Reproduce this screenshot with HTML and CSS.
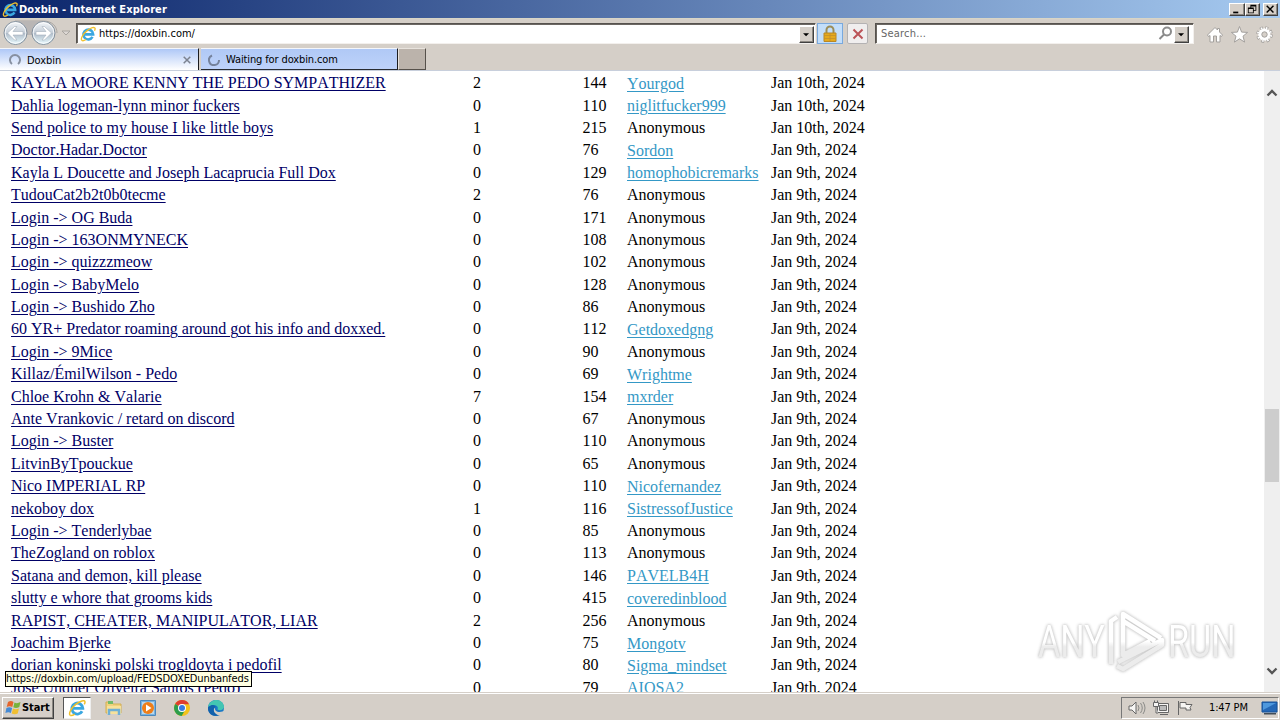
FILE: index.html
```html
<!DOCTYPE html>
<html lang="en">
<head>
<meta charset="utf-8">
<title>Doxbin - Internet Explorer</title>
<link rel="stylesheet" href="styles.css">
</head>
<body>
<svg width="0" height="0" class="defs">
  <defs>
    <linearGradient id="orb" x1="0" y1="0" x2="0" y2="1"><stop offset="0" stop-color="#f4f7fa"/><stop offset=".48" stop-color="#c5ced8"/><stop offset=".52" stop-color="#b1bdca"/><stop offset="1" stop-color="#e9fbff"/></linearGradient>
    <linearGradient id="mark" x1="0" y1="0" x2="0" y2="1"><stop offset=".5" stop-color="#fff"/><stop offset=".6" stop-color="#ececec"/></linearGradient>
    <symbol id="ie" viewBox="0 0 18 18">
      <path d="M14.100 12.300A5.500 5.500 0 1 1 14.800 9.400H5" fill="none" stroke="#3aa7e0" stroke-width="2.900"/>
      <path d="M2.200 16.300C.2 14.600 3.200 9 8 5.200 12 2 16.600.5 17 2.800c.1.700-.2 1.600-.7 2.500" fill="none" stroke="#f0c02c" stroke-width="1.500"/>
      <path d="M2.200 16.300c1.100.7 3-.1 4.500-1.100" fill="none" stroke="#f0c02c" stroke-width="1.500"/>
    </symbol>
  </defs>
</svg>
<div class="screen">
  <header class="titlebar">
    <svg class="ie-title"><use href="#ie"/></svg>
    <span class="title">Doxbin - Internet Explorer</span>
    <div class="winbtns">
      <svg width="16" height="13" viewBox="0 0 15 13"><path d="M3 9h6v2H3z"/></svg>
      <svg width="15" height="13" viewBox="0 0 15 13"><path d="M5 1h7v7H9V7h2V3H6v1H5zM2 4h7v7H2zm1 2v4h5V6z" fill-rule="evenodd"/></svg>
      <svg class="close" width="15" height="13" viewBox="0 0 15 13"><path d="M3 2l8 8M11 2l-8 8" stroke="#000" stroke-width="1.700"/></svg>
    </div>
  </header>

  <div class="toolbar">
    <svg class="nav" width="72" height="28" viewBox="0 0 72 28">
      <path d="M15 2h28c9 0 14 5 14 12" fill="none" stroke="#aaa7a4"/>
      <path d="M15 2h28v14H15z" fill="#b9b6b5"/>
      <g stroke="#83909d"><circle cx="15.500" cy="14" r="11.500" fill="url(#orb)"/><circle cx="43.500" cy="14" r="11.500" fill="url(#orb)"/></g>
      <g fill="none" stroke="#fff" stroke-opacity=".8"><circle cx="15.500" cy="14" r="10.300"/><circle cx="43.500" cy="14" r="10.300"/></g>
      <g fill="#fff" stroke="#a5b0bc" stroke-width=".6"><path d="M7.500 14l7-6.500h2.500l-4 5H23v3.500h-10l4 5h-2.500z"/><path d="M51.500 14l-7-6.500H42l4 5H36v3.500h10l-4 5h2.500z"/></g>
      <path d="M62 12h8l-4 4z" fill="#ddd8d4" stroke="#aaa6a1"/>
    </svg>
    <div class="field address">
      <svg class="ie-small"><use href="#ie"/></svg>
      <span>https://doxbin.com/</span>
      <svg class="drop" width="15" height="17" viewBox="0 0 15 17"><path d="M3.500 7h7L7 10.500z"/></svg>
    </div>
    <div class="tbtn lock"><svg width="16" height="18" viewBox="0 0 16 18"><path d="M4.500 9V5a3.500 3.500 0 0 1 7 0v4" fill="none" stroke="#9b8d59" stroke-width="2"/><path d="M2 8h12v8.500H2z" fill="#e5a91d" stroke="#b98725"/><path d="M2 10.500h12M2 13.500h12M8 8v8" stroke="#c4902b" stroke-width=".8"/></svg></div>
    <div class="tbtn stop"><svg width="12" height="12" viewBox="0 0 12 12"><path d="M1.500 1.500l9 9M10.500 1.500l-9 9" stroke="#bb5357" stroke-width="2"/></svg></div>
    <div class="field search">
      <span>Search...</span>
      <svg class="lens" width="15" height="15" viewBox="0 0 15 15"><circle cx="9" cy="5.500" r="4" fill="none" stroke="#8c8c8c" stroke-width="2"/><path d="M6 8.500L1.500 13" stroke="#888" stroke-width="2"/></svg>
      <svg class="drop" width="15" height="17" viewBox="0 0 15 17"><path d="M3.500 7h7L7 10.500z"/></svg>
    </div>
    <svg class="tools" width="70" height="20" viewBox="0 0 70 20" fill="#fff" stroke="#a3a09d">
      <path d="M1.500 10L9 2.500l2.500 2.500V3.500h2V7l3 3-1 1.500-1.500-1V17h-3.500v-6h-3v6H4v-6.500l-1.500 1z"/>
      <path d="M33.500 1.500l2.100 5.600 6 .3-4.600 3.800 1.600 5.900-5.100-3.300-5.100 3.300 1.600-5.900-4.600-3.800 6-.3z"/>
      <circle cx="58.500" cy="9.500" r="6.300" stroke-width="4" stroke-dasharray="2.700 2.250"/>
      <circle cx="58.500" cy="9.500" r="6.300" stroke="#fff" stroke-width="2.600" stroke-dasharray="1.500 3.450" stroke-dashoffset="-.6" fill="none"/>
      <circle cx="58.500" cy="9.500" r="4.400" stroke="#fff" stroke-width="2.600" fill="none"/>
      <circle cx="58.500" cy="9.500" r="2.700" fill="#d6d0c9"/>
    </svg>
  </div>

  <div class="tabs">
    <div class="tab active"><svg width="12" height="12" viewBox="0 0 12 12"><path d="M3 10a5 5 0 1 1 6 0" fill="none" stroke="#8790a0" stroke-width="2"/></svg><span>Doxbin</span><svg class="x" width="8" height="8" viewBox="0 0 8 8"><path d="M.7.7l6.600 6.600M7.300.7L.7 7.300" stroke="#7b8290" stroke-width="1.500"/></svg></div>
    <div class="tab waiting"><svg width="12" height="12" viewBox="0 0 12 12"><path d="M4 1.500A5 5 0 1 0 11 6" fill="none" stroke="#75829c" stroke-width="2"/></svg><span>Waiting for doxbin.com</span></div>
    <div class="newtab"></div>
  </div>

  <main class="page">
    <div class="list">
      <div class="row"><a class="wide">KAYLA MOORE KENNY THE PEDO SYMPATHIZER</a><i>2</i><i>144</i><b>Yourgod</b><i>Jan 10th, 2024</i></div>
      <div class="row"><a>Dahlia logeman-lynn minor fuckers</a><i>0</i><i>110</i><b>niglitfucker999</b><i>Jan 10th, 2024</i></div>
      <div class="row"><a>Send police to my house I like little boys</a><i>1</i><i>215</i><i>Anonymous</i><i>Jan 10th, 2024</i></div>
      <div class="row"><a>Doctor.Hadar.Doctor</a><i>0</i><i>76</i><b>Sordon</b><i>Jan 9th, 2024</i></div>
      <div class="row"><a>Kayla L Doucette and Joseph Lacaprucia Full Dox</a><i>0</i><i>129</i><b>homophobicremarks</b><i>Jan 9th, 2024</i></div>
      <div class="row"><a>TudouCat2b2t0b0tecme</a><i>2</i><i>76</i><i>Anonymous</i><i>Jan 9th, 2024</i></div>
      <div class="row"><a>Login -&gt; OG Buda</a><i>0</i><i>171</i><i>Anonymous</i><i>Jan 9th, 2024</i></div>
      <div class="row"><a>Login -&gt; 163ONMYNECK</a><i>0</i><i>108</i><i>Anonymous</i><i>Jan 9th, 2024</i></div>
      <div class="row"><a>Login -&gt; quizzzmeow</a><i>0</i><i>102</i><i>Anonymous</i><i>Jan 9th, 2024</i></div>
      <div class="row"><a>Login -&gt; BabyMelo</a><i>0</i><i>128</i><i>Anonymous</i><i>Jan 9th, 2024</i></div>
      <div class="row"><a>Login -&gt; Bushido Zho</a><i>0</i><i>86</i><i>Anonymous</i><i>Jan 9th, 2024</i></div>
      <div class="row"><a>60 YR+ Predator roaming around got his info and doxxed.</a><i>0</i><i>112</i><b>Getdoxedgng</b><i>Jan 9th, 2024</i></div>
      <div class="row"><a>Login -&gt; 9Mice</a><i>0</i><i>90</i><i>Anonymous</i><i>Jan 9th, 2024</i></div>
      <div class="row"><a>Killaz/ÉmilWilson - Pedo</a><i>0</i><i>69</i><b>Wrightme</b><i>Jan 9th, 2024</i></div>
      <div class="row"><a>Chloe Krohn &amp; Valarie</a><i>7</i><i>154</i><b>mxrder</b><i>Jan 9th, 2024</i></div>
      <div class="row"><a>Ante Vrankovic / retard on discord</a><i>0</i><i>67</i><i>Anonymous</i><i>Jan 9th, 2024</i></div>
      <div class="row"><a>Login -&gt; Buster</a><i>0</i><i>110</i><i>Anonymous</i><i>Jan 9th, 2024</i></div>
      <div class="row"><a>LitvinByTpouckue</a><i>0</i><i>65</i><i>Anonymous</i><i>Jan 9th, 2024</i></div>
      <div class="row"><a>Nico IMPERIAL RP</a><i>0</i><i>110</i><b>Nicofernandez</b><i>Jan 9th, 2024</i></div>
      <div class="row"><a>nekoboy dox</a><i>1</i><i>116</i><b>SistressofJustice</b><i>Jan 9th, 2024</i></div>
      <div class="row"><a>Login -&gt; Tenderlybae</a><i>0</i><i>85</i><i>Anonymous</i><i>Jan 9th, 2024</i></div>
      <div class="row"><a>TheZogland on roblox</a><i>0</i><i>113</i><i>Anonymous</i><i>Jan 9th, 2024</i></div>
      <div class="row"><a>Satana and demon, kill please</a><i>0</i><i>146</i><b>PAVELB4H</b><i>Jan 9th, 2024</i></div>
      <div class="row"><a>slutty e whore that grooms kids</a><i>0</i><i>415</i><b>coveredinblood</b><i>Jan 9th, 2024</i></div>
      <div class="row"><a>RAPIST, CHEATER, MANIPULATOR, LIAR</a><i>2</i><i>256</i><i>Anonymous</i><i>Jan 9th, 2024</i></div>
      <div class="row"><a>Joachim Bjerke</a><i>0</i><i>75</i><b>Mongotv</b><i>Jan 9th, 2024</i></div>
      <div class="row"><a>dorian koninski polski trogldoyta i pedofil</a><i>0</i><i>80</i><b>Sigma_mindset</b><i>Jan 9th, 2024</i></div>
      <div class="row"><a>Jose Undher Oliveira Santos (Pedo)</a><i>0</i><i>79</i><b>AIOSA2</b><i>Jan 9th, 2024</i></div>
    </div>
    <div class="scroll">
      <svg width="12" height="8" viewBox="0 0 12 8"><path d="M1.500 6.500L6 2l4.500 4.500" fill="none" stroke="#555" stroke-width="2.300"/></svg>
      <div class="thumb"></div>
      <svg width="12" height="8" viewBox="0 0 12 8"><path d="M1.500 1.500L6 6l4.500-4.500" fill="none" stroke="#555" stroke-width="2.300"/></svg>
    </div>
    <div class="status">https://doxbin.com/upload/FEDSDOXEDunbanfeds</div>
    <div class="watermark">
      <span>ANY</span>
      <svg width="62" height="66" viewBox="0 0 62 66" fill="none" stroke="url(#mark)" stroke-width="4.500" stroke-linejoin="round"><path d="M17 39V6l38 24M5 56V13l6-4M12 54l44-22v5L17 61l-6-3M17 39v8l27-14M17 13l32 20"/></svg>
      <span>RUN</span>
    </div>
  </main>

  <footer class="taskbar">
    <div class="start"><svg width="17" height="16" viewBox="0 0 17 16"><path d="M3 2q3-2 5.500 0L7.300 7Q4.500 5.500 1.700 7z" fill="#e5652c"/><path d="M9.500 2.500Q12 4 15.500 2L14.300 7q-3 1.700-6 .3z" fill="#78b23c"/><path d="M1.400 8q3-1.500 5.700 0L5.900 13q-2.500-1.500-5.500 0z" fill="#468bd5"/><path d="M8 8.500q2.800 1.500 6 0L12.700 13.500q-3 1.500-6 0z" fill="#f0bf31"/></svg><span>Start</span></div>
    <div class="ie-task"><svg width="18" height="18"><use href="#ie"/></svg></div>
    <svg class="app" width="18" height="18" viewBox="0 0 18 18"><path d="M1 3h6l1 2h8v9H1z" fill="#f0d27d" stroke="#d2ae54"/><path d="M3 2h5v3H3z" fill="#72bb69"/><path d="M2 7h14v8H2z" fill="#f7e19a"/><path d="M4 16v-5h10v5" fill="none" stroke="#6eafd5" stroke-width="2.500"/></svg>
    <svg class="app" width="18" height="18" viewBox="0 0 18 18"><path d="M1.500 1.500h15v15h-15z" fill="#78b2df" stroke="#4d89bd"/><path d="M3 3h12v12H3z" fill="#b9d8ed"/><circle cx="9" cy="9" r="6" fill="#ee7e19"/><path d="M7 5.500l5.500 3.500L7 12.500z" fill="#fff"/></svg>
    <svg class="app" width="18" height="18" viewBox="0 0 18 18"><circle cx="9" cy="9" r="8" fill="#f3c21b"/><path d="M9 9L2.100 5A8 8 0 0 1 16 5.200H9z" fill="#df3d30"/><path d="M2.100 5A8 8 0 0 0 8.600 17l3.700-6.200L9 9z" fill="#2c9d4c"/><circle cx="9" cy="9" r="4" fill="#fff"/><circle cx="9" cy="9" r="3" fill="#397be0"/></svg>
    <svg class="app" width="18" height="18" viewBox="0 0 18 18"><circle cx="9" cy="9" r="8" fill="#1a78c6"/><path d="M1 8c1-5 5-7 8.500-7C14 1 17 4.500 17 8c0 3-4 4-6.500 2.500C12 7 8 4.500 1 8z" fill="#43c5b2"/><path d="M8 8c-1 4 3 6 7.500 4.500l1-.5L18 13l-3 3-4 .5C7 16 5 11 8 8z" fill="#d3cec6"/><path d="M1.200 8C5 4.500 9 6 8.500 8 5 10 7 15 12 16.500 5 18 0 14 1.200 8z" fill="#1261ac"/></svg>
    <div class="tray">
      <svg width="74" height="20" viewBox="0 0 74 20" fill="#f6f5f3" stroke="#666" stroke-width="1">
        <path d="M2 8h3l4-4v12l-4-4H2z"/><path d="M11 7q2 3 0 6M13.500 5q3.500 5 0 10M16 4q4 6 0 12" fill="none" stroke="#8b8b88"/>
        <path d="M30.500 5.500h11v9h-11zM33 16.500h8"/><path d="M32.500 7.500h7v5h-7z" fill="#bbb"/><path d="M26.500 4.500h5v4h-5zM27.500 2.500v2M30.500 2.500v2M29 8.500v6.500h2" />
        <path d="M51.500 3v14M53 4.500h6v2h6l-2 3 1 2.500h-5v-2h-6z"/>
      </svg>
      <time>1:47 PM</time>
      <svg width="17" height="16" viewBox="0 0 17 16"><path d="M1 2h15v10H1z" fill="#2467b6" stroke="#15539b"/><path d="M2 3h13L2 10z" fill="#4e98dd"/><path d="M3 13h12v1.500H3z" fill="#424d58"/></svg>
    </div>
  </footer>
</div>
</body>
</html>
```
FILE: styles.css
```css
* { box-sizing: border-box; }
body { margin: 0; overflow: hidden; font: 11px "DejaVu Sans Condensed", "DejaVu Sans", sans-serif; color: #000; }
.defs { position: absolute; }
.screen { width: 1280px; height: 720px; display: flex; flex-direction: column; background: #d5cfc8; overflow: hidden; }
svg { display: block; flex: none; }
.titlebar { height: 18px; flex: none; display: flex; align-items: center; padding: 0 2px; background: linear-gradient(90deg, #0a246a, #a6caf0); color: #fff; }
.ie-title { width: 16px; height: 17px; }
.title { font-weight: bold; font-size: 11px; margin-left: 1px; letter-spacing: .08px; white-space: nowrap; }
.winbtns { margin-left: auto; display: flex; }
.winbtns svg, .drop { background: #d5cfc8; border: 1px solid; border-color: #fff #404040 #404040 #fff; box-shadow: inset -1px -1px #8c8882; }
.winbtns .close { margin-left: 3px; }
.toolbar { height: 30px; flex: none; display: flex; align-items: flex-start; padding-top: 1px; border-top: 1px solid #d8d5c6; }
.nav { margin: -1px 4px 0 0; }
.field { height: 21px; margin-top: 3px; display: flex; align-items: center; background: #fff; border: 1px solid; border-color: #56524e #f3f0ed #f3f0ed #56524e; box-shadow: inset 1px 1px #6c6863; white-space: nowrap; }
.address { width: 740px; padding-left: 3px; }
.ie-small { width: 16px; height: 16px; margin-right: 3px; }
.address span { letter-spacing: -.02px; }
.drop { margin: 1px 1px 0 auto; }
.tbtn { height: 21px; margin-top: 3px; display: grid; place-items: center; border: 1px solid; }
.lock { width: 26px; margin-left: 1px; background: #c3defa; border-color: #79a9de; }
.stop { width: 21px; margin-left: 4px; background: #f0eeee; border-color: #b4b2b3; border-radius: 2px; }
.search { width: 319px; margin-left: 7px; padding-left: 5px; color: #666; }
.search span { letter-spacing: .2px; }
.lens { margin-left: auto; }
.search .drop { margin-left: 1px; margin-right: 4px; }
.tools { margin: 5px 0 0 12px; }
.tabs { height: 23px; flex: none; display: flex; border-bottom: 1px solid #c8cfdc; }
.tab { height: 22px; display: flex; align-items: center; border-top: 1px solid #f4f6fa; border-right: 1px solid #1b1c20; white-space: nowrap; padding-top: 1px; }
.active { width: 199px; padding: 1px 7px 0 9px; background: linear-gradient(#afc8f7, #fff); }
.tab span { margin-left: 6px; letter-spacing: -.05px; }
.active .x { margin-left: auto; }
.waiting { width: 197px; margin-left: 2px; padding-left: 7px; background: linear-gradient(#b0c9f6, #bed2fa); border-bottom: 1px solid #292c32; }
.waiting span { letter-spacing: -.12px; }
.newtab { width: 28px; background: #bbb3ab; border: 1px solid #56514b; border-top-color: #e8e3dd; border-left-color: #e8e3dd; }
.page { height: 621px; flex: none; display: flex; background: #fff; overflow: hidden; position: relative; }
.list { flex: 1; padding: 1.200px 0 0 11px; font: 16px/22.400px "Liberation Serif", serif; font-kerning: none; }
.row { height: 22.400px; display: grid; grid-template-columns: 462px 109.500px 44.500px 144px 1fr; white-space: nowrap; }
.row > * { justify-self: start; font-weight: normal; font-style: normal; }
.row a { color: #000066; text-decoration: underline; text-underline-offset: 2px; }
.row b { color: #3498c6; text-decoration: underline; text-underline-offset: 2px; padding-top: .6px; }
.scroll { width: 16px; background: #efefef; display: flex; flex-direction: column; align-items: center; padding: 18px 0 17px; }
.thumb { width: 14px; height: 73px; background: #cdcdcd; margin: 312px 0 auto; }
.status { position: absolute; left: 5px; top: 600px; width: 247px; height: 16px; background: #ffffe1; border: 1px solid #000; line-height: 14px; letter-spacing: -.09px; white-space: nowrap; }
.watermark { position: absolute; left: 1038px; top: 537px; display: flex; align-items: center; color: transparent; font: 45px Roboto, sans-serif; filter: drop-shadow(0 0 1.500px #c4c4c4) drop-shadow(0 0 1px #ddd); }
.watermark span { width: 70px; margin-right: -4px; background: linear-gradient(#fff 52%, #ececec 60%); background-clip: text; transform: scaleX(.76); transform-origin: left; white-space: nowrap; }
.watermark span:first-child { width: 88px; margin-right: -20px; }
.watermark span:last-child { width: 88px; }
.taskbar { height: 28px; flex: none; display: flex; align-items: center; border-top: 1px solid #d5cfc8; box-shadow: inset 0 1px #fff; padding-top: 2px; }
.start { width: 52px; height: 22px; margin-left: 2px; padding-left: 2px; display: flex; align-items: center; font-weight: bold; letter-spacing: -.1px; border: 1px solid; border-color: #fff #404040 #404040 #fff; box-shadow: inset -1px -1px #8c8882; }
.start svg { margin-right: 0; }
.ie-task { width: 28px; height: 22px; margin: 0 16px 0 9px; display: grid; place-items: center; background: #fff; border: 1px solid; border-color: #555 #eee #eee #555; }
.app { margin: 0 16px 0 -2px; width: 18px; }
.app + .app { margin-left: 0; }
.tray { margin-left: auto; margin-right: 1px; width: 158px; height: 22px; display: flex; align-items: center; padding-left: 5px; border: 1px solid; border-color: #777 #fff #fff #777; }
.tray time { margin: 0 auto 0 8px; letter-spacing: -.15px; white-space: nowrap; }
```
